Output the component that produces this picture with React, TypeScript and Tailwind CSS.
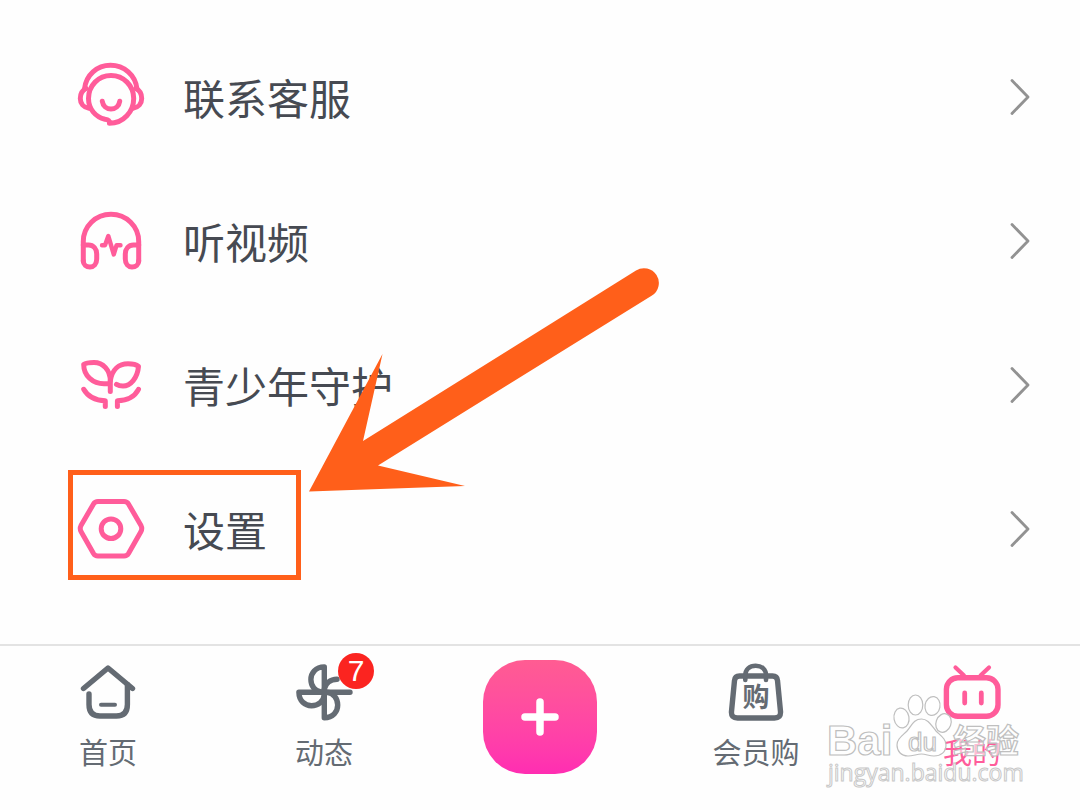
import React from 'react';

const pink = '#ff5c9a';
const gray = '#646b73';

interface IconProps {
  children: React.ReactNode;
}

function MenuIcon({ children }: IconProps) {
  return (
    <svg viewBox="0 0 74 74" className="w-[74px] h-[74px] shrink-0" fill="none" stroke={pink} strokeWidth="5" strokeLinecap="round" strokeLinejoin="round" aria-hidden="true">
      {children}
    </svg>
  );
}

function TabIcon({ children, color = gray }: IconProps & { color?: string }) {
  return (
    <svg viewBox="0 0 60 60" className="w-[60px] h-[60px]" fill="none" stroke={color} strokeWidth="5.4" strokeLinecap="round" strokeLinejoin="round" aria-hidden="true">
      {children}
    </svg>
  );
}

const menu = [
  {
    label: '联系客服',
    icon: (
      <MenuIcon>
        <path d="M10.5 29C12 15 23 5.3 36.5 5.3S61.5 15 63 29" />
        <path d="M12 28.5C8 30.5 6.3 34 6.3 38.5C6.3 43.5 9.5 47.5 15 48.3" />
        <path d="M62 28.5C66 30.5 67.7 34 67.7 38.5C67.7 43.5 64.5 47.5 59 48.3" />
        <path d="M35.5 63.3C49.5 63.3 59.7 51.5 59.7 38.5C59.7 25.5 49.5 15.5 37 15.5S14.5 25.5 14.5 38.5C14.5 49 21.5 57 31 59.3C34.5 59.8 36 61 35.5 63.3" />
        <path d="M28.3 41.3C29 46 32.5 49 37 49S45 46 45.7 41.3" />
      </MenuIcon>
    ),
  },
  {
    label: '听视频',
    icon: (
      <MenuIcon>
        <path d="M9.3 57V37.5C9.3 22.5 21.5 10.3 37 10.3S64.7 22.5 64.7 37.5V57" />
        <path d="M9.3 41H14.5C19.5 41 22.7 45 22.7 50V55C22.7 60 19.7 63 16 63S9.3 60.5 9.3 57" />
        <path d="M64.7 41H59.5C54.5 41 51.3 45 51.3 50V55C51.3 60 54.3 63 58 63S64.7 60.5 64.7 57" />
        <path strokeWidth="4.4" d="M28 41.3H31L34.3 32L39.8 50.5L42.5 41.3H46.5" />
      </MenuIcon>
    ),
  },
  {
    label: '青少年守护',
    icon: (
      <MenuIcon>
        <path d="M36.3 43.5V33C36.3 22 29 14.5 20 14.5C15.5 14.5 11 15.5 9.7 16.5C9.7 28 19 35.8 30 35.8H36" />
        <path d="M36.3 33C38 21.5 45 15.8 54 15.8C59 15.8 62.5 16.8 64.5 18.5C63.5 30 56.5 38 49 38C46 38 44 37.3 42.5 36.3" />
        <path d="M9.7 41.3C14 49 22 52.5 31.3 52.8V58.5" />
        <path d="M64.5 41.3C60.5 49 53 52.5 43.4 52.8V58.5" />
      </MenuIcon>
    ),
  },
  {
    label: '设置',
    highlighted: true,
    icon: (
      <MenuIcon>
        <path d="M24 9.5H50Q53 9.5 54.5 12L67 33.5Q68.5 36.5 67 39.5L54.5 61.5Q53 64 50 64H24Q21 64 19.5 61.5L7 39.5Q5.5 36.5 7 33.5L19.5 12Q21 9.5 24 9.5Z" />
        <circle cx="37" cy="36.7" r="9.8" />
      </MenuIcon>
    ),
  },
];

const blade = 'M30.3 29.3V3.9C21.5 4 16.9 10 16.9 16.5C16.9 23 21 28.5 27.5 29.3';

const homeIcon = (
  <TabIcon>
    <path d="M5.5 25.5L30 5L54.5 25.5" />
    <path d="M11 31V41.5C11 49 14.5 53 22 53H38.5C46 53 49.4 49 49.4 41.5V21.5" />
    <path strokeWidth="4" d="M23 41.7H37" />
  </TabIcon>
);

const fanIcon = (
  <TabIcon>
    <path d={blade} />
    <path d="M30.3 29.3H56M30.3 26C31.5 20.5 36 16.3 43 16.2" />
    <path d={blade} transform="rotate(180 30.3 29.3)" />
    <path d={blade} transform="rotate(270 30.3 29.3)" />
  </TabIcon>
);

const bagIcon = (
  <TabIcon>
    <path d="M13.5 13H46.5Q51 13 51.5 17.500L54.500 48.500Q55 55 48.500 55H11.500Q5 55 5.500 48.500L8.500 17.500Q9 13 13.500 13Z" />
    <path strokeWidth="4.6" d="M19.3 17V12.5C19.3 6.5 23.5 2.7 29.7 2.7S40 6.5 40 12.500V17" />
    <text x="30" y="43.500" textAnchor="middle" fontSize="27" fontWeight="700" fontFamily="'Noto Sans CJK SC', sans-serif" fill={gray} stroke="none">购</text>
  </TabIcon>
);

const tvIcon = (
  <TabIcon color={pink}>
    <rect x="4.4" y="14.7" width="51.6" height="38.6" rx="11.5" />
    <path strokeWidth="4.2" d="M13.5 4.5L22 12.5M47 4.5L38.5 12.5" />
    <path strokeWidth="4.8" d="M22.7 30V40M39.3 30V40" />
  </TabIcon>
);

function Tab({ label, icon, badge, active }: { label: string; icon: React.ReactNode; badge?: number; active?: boolean }) {
  return (
    <a href="#" aria-current={active ? 'page' : undefined} className={`flex flex-col items-center gap-3 pt-[17px] text-[29px] leading-8 ${active ? 'text-[#ff5c9a]' : 'text-[#646b73]'}`}>
      <span className="relative">
        {icon}
        {badge && (
          <span className="absolute -top-[10px] -right-5 w-9 h-9 rounded-full bg-[#fb2420] text-center text-white font-['Liberation_Sans',sans-serif] text-[30px] leading-9">
            {badge}
          </span>
        )}
      </span>
      {label}
    </a>
  );
}

function Watermark() {
  return (
    <div className="absolute right-[56px] bottom-[26px] w-[204px] pointer-events-none">
      <svg viewBox="0 0 204 70" className="w-full h-[70px]" fill="#fff" fillOpacity="0.6" stroke="#bfbfbf" strokeWidth="1.200" aria-label="Baidu 经验">
        <text x="7" y="65" fontSize="42" fontWeight="700" fontFamily="'Liberation Sans', Arial, sans-serif">Bai</text>
        <ellipse cx="81.500" cy="28" rx="7.500" ry="10" transform="rotate(-10 81.500 28)" />
        <ellipse cx="95.500" cy="15" rx="7.300" ry="10" />
        <ellipse cx="112.500" cy="16" rx="7.500" ry="9.500" transform="rotate(10 112.500 16)" />
        <ellipse cx="123.500" cy="33" rx="7.500" ry="9.500" transform="rotate(20 123.500 33)" />
        <path d="M101.500 29C108 29 111 35 116 41C121 46 126 49 126 55C126 62 121 66 114 66C109 66 106 64 101.500 64S93 66 88 66C81 66 77 61 77 55C77 49 82 46 87 41C92 35 94 29 101.500 29Z" />
        <text x="88" y="61" fontSize="26" fontFamily="'Liberation Sans', Arial, sans-serif">du</text>
        <text x="133" y="63" fontSize="33" fontWeight="700" fontFamily="'Noto Sans CJK SC', sans-serif">经验</text>
      </svg>
      <p className="pl-2 font-['Open_Sans',sans-serif] text-[23px] leading-6 whitespace-nowrap text-white/60 [-webkit-text-stroke:1px_#c8c8c8]">jingyan.baidu.com</p>
    </div>
  );
}

export default function App() {
  return (
    <div className="relative min-h-screen flex flex-col bg-[#fefefe] overflow-hidden font-['Noto_Sans_CJK_SC',sans-serif]">
      <ul className="relative flex-1 pt-[25px]">
        {menu.map((item) => (
          <li key={item.label} className="relative">
            <a href="#" className="flex items-center h-36 pl-[74px] pr-[48px] gap-[35px] text-[42px] leading-[48px] text-[#464a52]">
              {item.icon}
              <span className="flex-1">{item.label}</span>
              <svg viewBox="0 0 24 40" className="w-6 h-10" fill="none" stroke="#929292" strokeWidth="2.8" strokeLinecap="round" strokeLinejoin="round" aria-hidden="true">
                <path d="M4 3.5L20 20L4 36.5" />
              </svg>
            </a>
            {item.highlighted && (
              <span className="absolute left-[68px] top-[13px] w-[233px] h-[110px] border-5 border-[#ff5f1a] pointer-events-none" />
            )}
          </li>
        ))}
        {/* Pointer to the settings row */}
        <svg viewBox="0 0 352 224" className="absolute left-[308px] top-[268px] w-[352px] h-[224px] pointer-events-none" fill="#ff5f1a" aria-hidden="true">
          <path d="M1 223.5L74.5 86L55 173L328 2.500A14.800 14.800 0 0 1 344 27.500L70 197.500L157 218Z" />
        </svg>
      </ul>

      <nav className="grid grid-cols-5 h-[166px] border-t-2 border-[#e3e3e3]">
        <Tab label="首页" icon={homeIcon} />
        <Tab label="动态" icon={fanIcon} badge={7} />
        <button type="button" aria-label="发布" className="mt-[14px] w-[114px] h-[114px] justify-self-center flex items-center justify-center rounded-[42px] bg-linear-to-b from-[#ff5c92] to-[#ff2db2]">
          <svg viewBox="0 0 40 40" className="w-10 h-10" fill="none" stroke="#fff" strokeWidth="7.5" strokeLinecap="round" aria-hidden="true">
            <path d="M20 5V35M5 20H35" />
          </svg>
        </button>
        <Tab label="会员购" icon={bagIcon} />
        <Tab label="我的" icon={tvIcon} active />
      </nav>
      <Watermark />
    </div>
  );
}
